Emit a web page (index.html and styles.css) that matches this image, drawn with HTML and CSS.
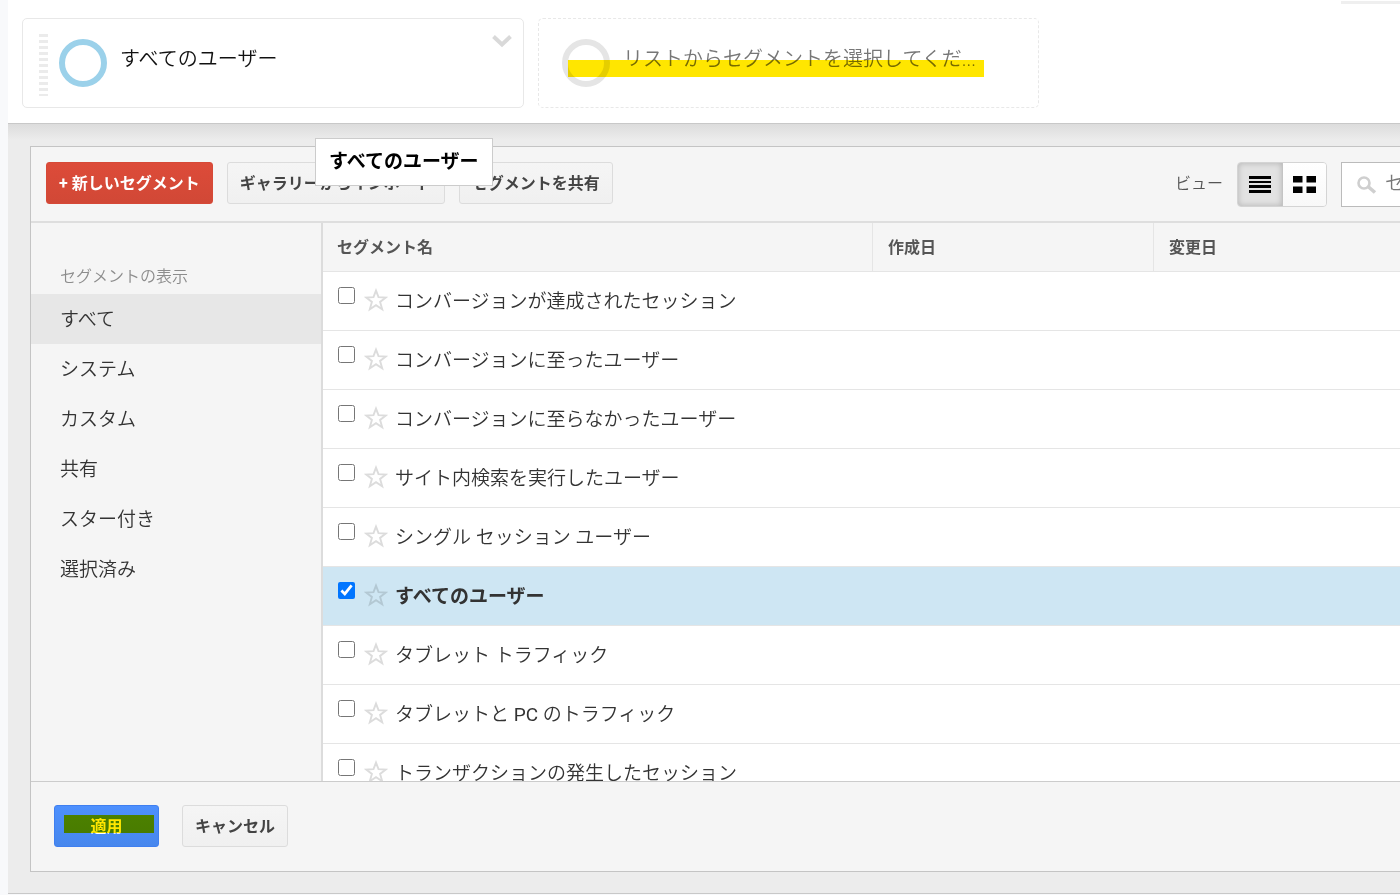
FILE: index.html
```html
<!DOCTYPE html>
<html lang="ja">
<head>
<meta charset="utf-8">
<title>セグメント</title>
<link rel="stylesheet" href="styles.css">
</head>
<body>
<svg class="defs" aria-hidden="true">
  <symbol id="star" viewBox="0 0 24 24">
    <path d="M12 2.6 L14.5 9.2 L21.8 9.5 L16.1 13.9 L18.2 21.2 L12 17.1 L5.8 21.2 L7.9 13.9 L2.2 9.5 L9.5 9.2 Z" fill="none" stroke="currentColor" stroke-width="1.9"/>
  </symbol>
</svg>
<div class="app">
  <header class="segments">
    <div class="card">
      <span class="grip"></span>
      <span class="ring"></span>
      <span class="card-name">すべてのユーザー</span>
      <button class="card-menu" type="button" aria-label="メニュー">
        <svg width="20" height="14" viewBox="0 0 20 14"><path d="M1.5 2.5 L10 10.5 L18.5 2.5" fill="none" stroke="currentColor" stroke-width="4"/></svg>
      </button>
    </div>
    <div class="card card-empty">
      <span class="ring ring-empty"></span>
      <span class="card-name">リストからセグメントを選択してくだ...</span>
      <span class="marker marker-card"></span>
    </div>
    <span class="edge"></span>
  </header>
  <main class="stage">
    <section class="panel">
      <div class="toolbar">
        <button class="btn btn-red" type="button">+ 新しいセグメント</button>
        <button class="btn" type="button">ギャラリーからインポート</button>
        <button class="btn" type="button">セグメントを共有</button>
        <span class="view-label">ビュー</span>
        <div class="views">
          <button class="view view-on" type="button" aria-label="リスト">
            <svg width="22" height="17" viewBox="0 0 22 17"><path d="M0 0h22v3H0zM0 5h22v2H0zM0 9h22v3H0zM0 14h22v3H0z"/></svg>
          </button>
          <button class="view" type="button" aria-label="グリッド">
            <svg width="23" height="17" viewBox="0 0 23 17"><path d="M0 0h9.500v6.500H0zM13.500 0H23v6.500h-9.500zM0 10.500h9.500V17H0zM13.500 10.500H23V17h-9.500z"/></svg>
          </button>
        </div>
        <div class="search">
          <svg width="20" height="18" viewBox="0 0 20 18"><circle cx="7" cy="7" r="5.500" fill="none" stroke="currentColor" stroke-width="2.600"/><path d="M11 10.500 L18 16.500" stroke="currentColor" stroke-width="3.600"/></svg>
          <input type="text" placeholder="セ" aria-label="検索">
        </div>
        <div class="tooltip">すべてのユーザー</div>
      </div>
      <div class="content">
        <nav class="side">
          <h2 class="side-title">セグメントの表示</h2>
          <a class="side-item side-on" href="#">すべて</a>
          <a class="side-item" href="#">システム</a>
          <a class="side-item" href="#">カスタム</a>
          <a class="side-item" href="#">共有</a>
          <a class="side-item" href="#">スター付き</a>
          <a class="side-item" href="#">選択済み</a>
        </nav>
        <div class="list">
          <table class="table">
            <thead><tr><th class="col-name">セグメント名</th><th class="col-date">作成日</th><th>変更日</th></tr></thead>
            <tbody>
              <tr><td colspan="3"><label class="row"><input type="checkbox"><svg class="star"><use href="#star"/></svg><span>コンバージョンが達成されたセッション</span></label></td></tr>
              <tr><td colspan="3"><label class="row"><input type="checkbox"><svg class="star"><use href="#star"/></svg><span>コンバージョンに至ったユーザー</span></label></td></tr>
              <tr><td colspan="3"><label class="row"><input type="checkbox"><svg class="star"><use href="#star"/></svg><span>コンバージョンに至らなかったユーザー</span></label></td></tr>
              <tr><td colspan="3"><label class="row"><input type="checkbox"><svg class="star"><use href="#star"/></svg><span>サイト内検索を実行したユーザー</span></label></td></tr>
              <tr><td colspan="3"><label class="row"><input type="checkbox"><svg class="star"><use href="#star"/></svg><span>シングル セッション ユーザー</span></label></td></tr>
              <tr class="selected"><td colspan="3"><label class="row"><input type="checkbox" checked><svg class="star"><use href="#star"/></svg><span>すべてのユーザー</span></label></td></tr>
              <tr><td colspan="3"><label class="row"><input type="checkbox"><svg class="star"><use href="#star"/></svg><span>タブレット トラフィック</span></label></td></tr>
              <tr><td colspan="3"><label class="row"><input type="checkbox"><svg class="star"><use href="#star"/></svg><span>タブレットと <span class="latin">PC</span> のトラフィック</span></label></td></tr>
              <tr><td colspan="3"><label class="row"><input type="checkbox"><svg class="star"><use href="#star"/></svg><span>トランザクションの発生したセッション</span></label></td></tr>
            </tbody>
          </table>
        </div>
      </div>
      <footer class="actions">
        <button class="btn btn-blue" type="button">適用<span class="marker marker-apply"></span></button>
        <button class="btn" type="button">キャンセル</button>
      </footer>
    </section>
  </main>
</div>
</body>
</html>
```

FILE: styles.css
```css
* { box-sizing: border-box; }

body {
  margin: 0;
  background: #f8f9fb;
  color: #333;
  font-family: Roboto, "Noto Sans CJK JP", sans-serif;
  font-size: 19px;
  font-weight: 350;
}

button, input { font-family: inherit; margin: 0; }

.defs { position: absolute; width: 0; height: 0; }

.app {
  display: flex;
  flex-direction: column;
  height: 100vh;
  padding: 0 0 1px 8px;
}

/* Selected segments */
.segments {
  position: relative;
  display: flex;
  gap: 14px;
  padding: 18px 14px 15px;
  background: #fff;
  border-bottom: 1px solid #c8c8c8;
}

.card {
  position: relative;
  display: flex;
  flex: 0 1 502px;
  height: 90px;
  padding: 15px 16px;
  border: 1px solid #e8e8e8;
  border-radius: 5px;
  background: #fff;
}

.card-empty { flex-basis: 501px; padding-left: 23px; border-style: dashed; }

.grip {
  width: 9px;
  height: 62px;
  background: repeating-linear-gradient(#ebebeb 0 3px, #fff 3px 6px);
}

.ring {
  width: 48px;
  height: 48px;
  margin: 5px 0 0 11px;
  border: 6px solid #9bd1ea;
  border-radius: 50%;
}

.ring-empty { margin-left: 0; border-color: #e5e5e5; }

.card-name {
  margin-left: 13px;
  color: #111;
  font-size: 20px;
  line-height: 50px;
  white-space: nowrap;
}

.card-empty .card-name { color: #777; }

.card-menu {
  display: flex;
  height: 14px;
  margin-left: auto;
  margin-right: -5px;
  padding: 0;
  border: 0;
  background: none;
  color: #d9d9d9;
}

.marker { position: absolute; background: #ffe600; mix-blend-mode: multiply; }
.marker-card { left: 29px; top: 41px; width: 416px; height: 17px; }
.marker-apply { left: 9px; right: 4px; top: 9px; height: 18px; }

.edge { position: absolute; top: 1px; right: 0; width: 59px; height: 3px; background: #efefef; }

.stage {
  display: flex;
  flex: 1;
  min-height: 0;
  padding: 22px 0 21px 22px;
  border-bottom: 1px solid #c8c8c8;
  background: linear-gradient(#dcdcdc, #ececec 16px);
}

.panel {
  display: flex;
  flex: 1;
  flex-direction: column;
  min-width: 0;
  border: 1px solid #c4c4c4;
  border-right: 0;
  background: #f5f5f5;
}

/* Toolbar */
.toolbar {
  position: relative;
  display: flex;
  align-items: flex-start;
  gap: 14px;
  height: 76px;
  padding: 15px 0 0 15px;
  border-bottom: 2px solid #dedede;
}

.btn {
  position: relative;
  height: 42px;
  padding: 0 12px 3px;
  border: 1px solid #dcdcdc;
  border-radius: 3px;
  background: linear-gradient(#f5f5f5, #f0f0f0);
  color: #444;
  font-size: 16px;
  font-weight: 700;
  white-space: nowrap;
}

.btn-red {
  border-color: #d64937;
  background: linear-gradient(#dd4b39, #d14836);
  color: #fff;
}

.btn-blue {
  width: 105px;
  border-color: #3f7ff0;
  background: linear-gradient(#4d90fe, #4787ed);
  color: #fff;
}

.view-label { margin-left: auto; color: #555; font-size: 16px; line-height: 44px; }

.views {
  display: flex;
  width: 90px;
  height: 45px;
  border: 1px solid #d4d4d4;
  border-radius: 4px;
  overflow: hidden;
}

.view {
  display: flex;
  flex: 1;
  align-items: center;
  justify-content: center;
  padding: 0;
  border: 0;
  background: linear-gradient(#fff, #f8f8f8);
}

.view-on {
  border-right: 1px solid #c4c4c4;
  background: #e2e2e2;
  box-shadow: inset 0 0 6px #b0b0b0;
}

.search {
  display: flex;
  align-items: center;
  width: 59px;
  height: 45px;
  padding-left: 15px;
  border: 1px solid #bbb;
  border-right: 0;
  background: #fff;
  color: #cfcfcf;
}

.search svg { flex: none; }

.search input {
  flex: 1;
  min-width: 0;
  height: 40px;
  padding: 0 0 3px 8px;
  border: 0;
  background: none;
  color: #444;
  font-size: 19px;
  font-weight: 350;
}

.search input::placeholder { color: #777; }

.tooltip {
  position: absolute;
  left: 284px;
  top: -9px;
  height: 48px;
  padding: 0 13px;
  border: 1px solid #ccc;
  background: #fff;
  color: #000;
  font-weight: 700;
  line-height: 46px;
}

/* Sidebar and list */
.content { display: flex; flex: 1; min-height: 0; }

.side {
  flex: 0 0 292px;
  padding-top: 35px;
  border-right: 2px solid #dcdcdc;
}

.side-title {
  height: 36px;
  margin: 0;
  padding-left: 29px;
  color: #8c8c8c;
  font-size: 16px;
  font-weight: 350;
  line-height: 38px;
}

.side-item {
  display: block;
  height: 50px;
  padding-left: 29px;
  color: #333;
  line-height: 52px;
  text-decoration: none;
}

.side-on { background: #e7e7e7; }

.list { flex: 1; min-width: 0; overflow: hidden; background: #fff; }

.table { width: 100%; border-collapse: separate; border-spacing: 0; table-layout: fixed; }

.table th {
  height: 49px;
  padding: 0 15px 2px 14px;
  border-right: 1px solid #e5e5e5;
  border-bottom: 1px solid #e5e5e5;
  background: #f5f5f5;
  color: #555;
  font-size: 16px;
  text-align: left;
}

.table th + th { padding-left: 15px; }
.table th:last-child { border-right: 0; }
.table .col-name { width: 550px; }
.table .col-date { width: 281px; }

.table td { padding: 0; border-bottom: 1px solid #e5e5e5; }

.row {
  display: flex;
  align-items: flex-start;
  height: 58px;
  padding-left: 15px;
  line-height: 60px;
  white-space: nowrap;
}

.row input { width: 17px; height: 17px; margin-top: 15px; }

.latin { font-weight: 400; }

.star { width: 24px; height: 24px; margin: 16px 7px 0 9px; color: #dcdcdc; }

.selected { background: #cee6f3; color: #333; font-weight: 700; }
.selected .star { color: #b3c8d3; }

.actions {
  display: flex;
  gap: 23px;
  height: 90px;
  padding: 23px;
  border-top: 1px solid #ccc;
}
```
